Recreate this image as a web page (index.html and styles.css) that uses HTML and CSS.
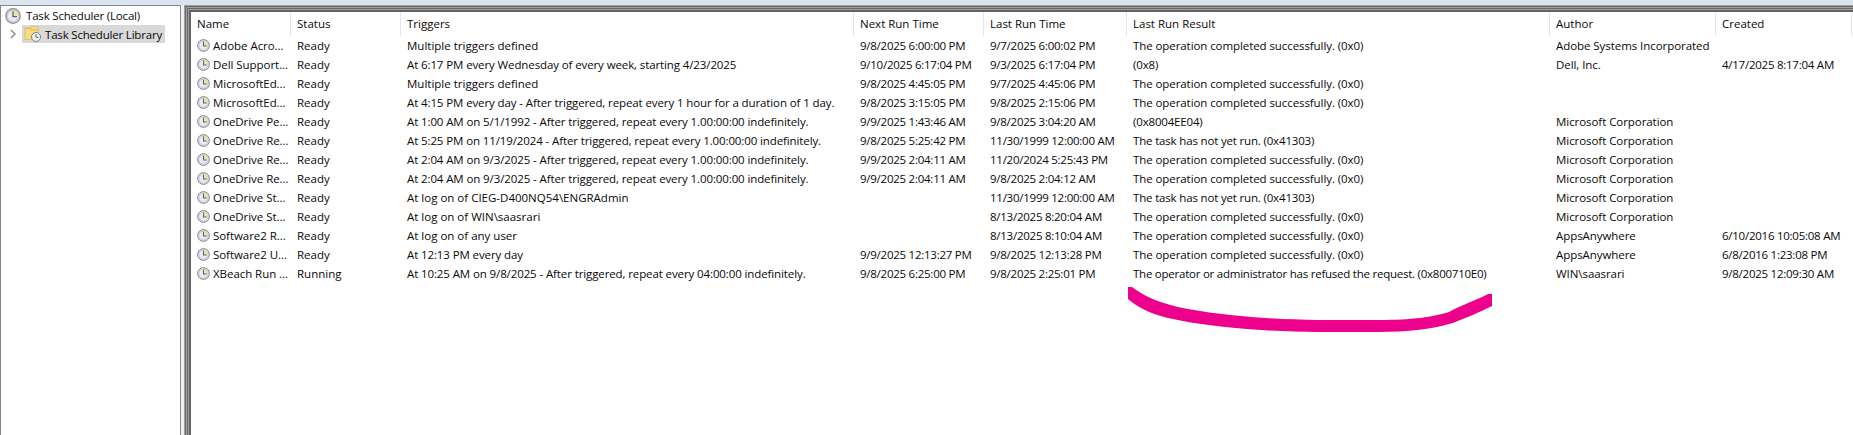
FILE: index.html
```html
<!DOCTYPE html>
<html lang="en">
<head>
<meta charset="utf-8">
<title>Task Scheduler</title>
<link rel="stylesheet" href="styles.css">
</head>
<body>
<svg class="defs" width="0" height="0" aria-hidden="true">
  <symbol id="clock" viewBox="0 0 16 16">
    <circle cx="8" cy="8" r="7.3" fill="#d8d9da" stroke="#8b8d90" stroke-width="1.2"/>
    <circle cx="8" cy="8" r="5.6" fill="#e9ecf6" stroke="#b9bcc0" stroke-width=".7"/>
    <path d="M8 8V2.6A5.4 5.4 0 0 1 13.4 8z" fill="#eee6a0"/>
    <path d="M8 3.2V8.6H12" fill="none" stroke="#5b6272" stroke-width="1.3"/>
  </symbol>
</svg>
<div class="window">
  <nav class="tree">
    <div class="node root"><svg class="root-icon"><use href="#clock"/></svg><span>Task Scheduler (Local)</span></div>
    <div class="node child">
      <svg class="chevron" viewBox="0 0 6 10"><path d="M1 1l4 4-4 4" fill="none" stroke="#8c8c8c" stroke-width="1.5"/></svg>
      <div class="selected">
        <svg class="folder" viewBox="0 0 17 16">
          <path d="M1 1.5H6L7 3V13.5H1z" fill="#e9bd55"/>
          <path d="M7 .5H14V4H7z" fill="#f5dc91" stroke="#dcb65a" stroke-width=".6"/>
          <path d="M1 2.5H5.5L7 4H14.5V13.5H1z" fill="#f8dc83" stroke="#dfb654" stroke-width=".7"/>
          <circle cx="12" cy="11" r="4.5" fill="#f1f3f1" stroke="#77807c" stroke-width="1"/>
          <path d="M12 8.2V11.3H14.4" fill="none" stroke="#596461" stroke-width="1"/>
        </svg>
        <span>Task Scheduler Library</span>
      </div>
    </div>
  </nav>
  <main class="list-frame">
    <div class="list" id="list">
      <div class="row head"><div>Name</div><div>Status</div><div>Triggers</div><div>Next Run Time</div><div>Last Run Time</div><div>Last Run Result</div><div>Author</div><div>Created</div></div>
    </div>
    <svg class="marker" viewBox="0 0 366 48"><path d="M0 2H4C14 10 32 19 60 24C105 32 150 34.5 190 35H250C285 35 305 32 321 27C335 19 345 17 360 9H364V21C350 28 340 32 325 38C305 44 280 47 250 47H190C140 47 80 42 40 33C20 28 8 21 0 14Z" fill="#ec008c"/></svg>
  </main>
</div>
<script src="tasks.js"></script>
</body>
</html>
```
FILE: styles.css
```css
* { box-sizing: border-box; }
body { margin: 0; background: #fff; color: #080808; font: 11.5px/19px "Open Sans", "Noto Sans", sans-serif; overflow: hidden; }
.defs { position: absolute; }
.window { display: flex; width: 1853px; height: 435px; padding-top: 5px; background: #dae4ee; }
.tree { width: 181px; flex: none; border: solid #828790; border-width: 1px 1px 0; background: #fff; letter-spacing: -.19px; }
.node { display: flex; align-items: center; height: 19px; white-space: nowrap; }
.root { padding-left: 4px; gap: 5px; }
.root-icon { width: 16px; height: 16px; }
.child { padding-left: 9px; gap: 6px; height: 18px; }
.chevron { width: 6px; height: 10px; }
.selected { display: flex; align-items: center; gap: 4px; width: 143px; height: 18px; padding-left: 2px; background: #d9d9d9; }
.folder { width: 17px; height: 16px; }
.list-frame { position: relative; flex: 1; margin-left: 3px; padding: 7px 0 0 7px; background: #646464; box-shadow: -3px 0 #f0f0f0, inset 1px 1px #a0a0a0, inset 2px 2px #696969, inset 3px 3px #a0a0a0, inset 4px 4px #696969, inset 5px 5px #a0a0a0; }
.list { height: 100%; background: #fff; }
.row { display: grid; grid-template-columns: 100px 110px 453px 130px 143px 423px 166px 136px; height: 19px; }
.row > div { display: flex; align-items: center; padding-left: 6px; white-space: nowrap; }
.row .task { gap: 3px; letter-spacing: -.05px; }
.task svg { width: 13px; height: 13px; flex: none; }
.head { height: 24px; }
.head > div { padding-bottom: 2px; border-right: 1px solid #e5e5e5; }
.date { letter-spacing: -.25px; }
.schedule { letter-spacing: -.11px; }
.ok { letter-spacing: -.08px; }
.pending { letter-spacing: -.17px; }
.refused { letter-spacing: -.24px; }
.author { letter-spacing: -.06px; }
.marker { position: absolute; left: 944px; top: 280px; width: 366px; height: 48px; }
```
FILE: tasks.js
```js
const ok = 'The operation completed successfully. (0x0)';
const pending = 'The task has not yet run. (0x41303)';
const ms = 'Microsoft Corporation';
const tasks = [
  ['Adobe Acro...', 'Ready', 'Multiple triggers defined', '9/8/2025 6:00:00 PM', '9/7/2025 6:00:02 PM', ok, 'Adobe Systems Incorporated', ''],
  ['Dell Support...', 'Ready', 'At 6:17 PM every Wednesday of every week, starting 4/23/2025', '9/10/2025 6:17:04 PM', '9/3/2025 6:17:04 PM', '(0x8)', 'Dell, Inc.', '4/17/2025 8:17:04 AM'],
  ['MicrosoftEd...', 'Ready', 'Multiple triggers defined', '9/8/2025 4:45:05 PM', '9/7/2025 4:45:06 PM', ok, '', ''],
  ['MicrosoftEd...', 'Ready', 'At 4:15 PM every day - After triggered, repeat every 1 hour for a duration of 1 day.', '9/8/2025 3:15:05 PM', '9/8/2025 2:15:06 PM', ok, '', ''],
  ['OneDrive Pe...', 'Ready', 'At 1:00 AM on 5/1/1992 - After triggered, repeat every 1.00:00:00 indefinitely.', '9/9/2025 1:43:46 AM', '9/8/2025 3:04:20 AM', '(0x8004EE04)', ms, ''],
  ['OneDrive Re...', 'Ready', 'At 5:25 PM on 11/19/2024 - After triggered, repeat every 1.00:00:00 indefinitely.', '9/8/2025 5:25:42 PM', '11/30/1999 12:00:00 AM', pending, ms, ''],
  ['OneDrive Re...', 'Ready', 'At 2:04 AM on 9/3/2025 - After triggered, repeat every 1.00:00:00 indefinitely.', '9/9/2025 2:04:11 AM', '11/20/2024 5:25:43 PM', ok, ms, ''],
  ['OneDrive Re...', 'Ready', 'At 2:04 AM on 9/3/2025 - After triggered, repeat every 1.00:00:00 indefinitely.', '9/9/2025 2:04:11 AM', '9/8/2025 2:04:12 AM', ok, ms, ''],
  ['OneDrive St...', 'Ready', 'At log on of CIEG-D400NQ54\\ENGRAdmin', '', '11/30/1999 12:00:00 AM', pending, ms, ''],
  ['OneDrive St...', 'Ready', 'At log on of WIN\\saasrari', '', '8/13/2025 8:20:04 AM', ok, ms, ''],
  ['Software2 R...', 'Ready', 'At log on of any user', '', '8/13/2025 8:10:04 AM', ok, 'AppsAnywhere', '6/10/2016 10:05:08 AM'],
  ['Software2 U...', 'Ready', 'At 12:13 PM every day', '9/9/2025 12:13:27 PM', '9/8/2025 12:13:28 PM', ok, 'AppsAnywhere', '6/8/2016 1:23:08 PM'],
  ['XBeach Run ...', 'Running', 'At 10:25 AM on 9/8/2025 - After triggered, repeat every 04:00:00 indefinitely.', '9/8/2025 6:25:00 PM', '9/8/2025 2:25:01 PM', 'The operator or administrator has refused the request. (0x800710E0)', 'WIN\\saasrari', '9/8/2025 12:09:30 AM']
];
const resultClass = text => text === ok ? 'ok' : text.startsWith('The operator') ? 'refused' : 'pending';
const classes = ['task', 'status', 'trigger', 'date', 'date', 'result', 'author', 'date'];
const cellClass = (text, i) => {
  if (i === 5) return resultClass(text);
  if (i === 2 && text.includes('every')) return 'schedule';
  return classes[i];
};
document.getElementById('list').insertAdjacentHTML('beforeend', tasks.map(task =>
  '<div class="row">' + task.map((text, i) =>
    `<div class="${cellClass(text, i)}">${i === 0 ? '<svg><use href="#clock"/></svg>' : ''}<span>${text}</span></div>`
  ).join('') + '</div>').join(''));
```
